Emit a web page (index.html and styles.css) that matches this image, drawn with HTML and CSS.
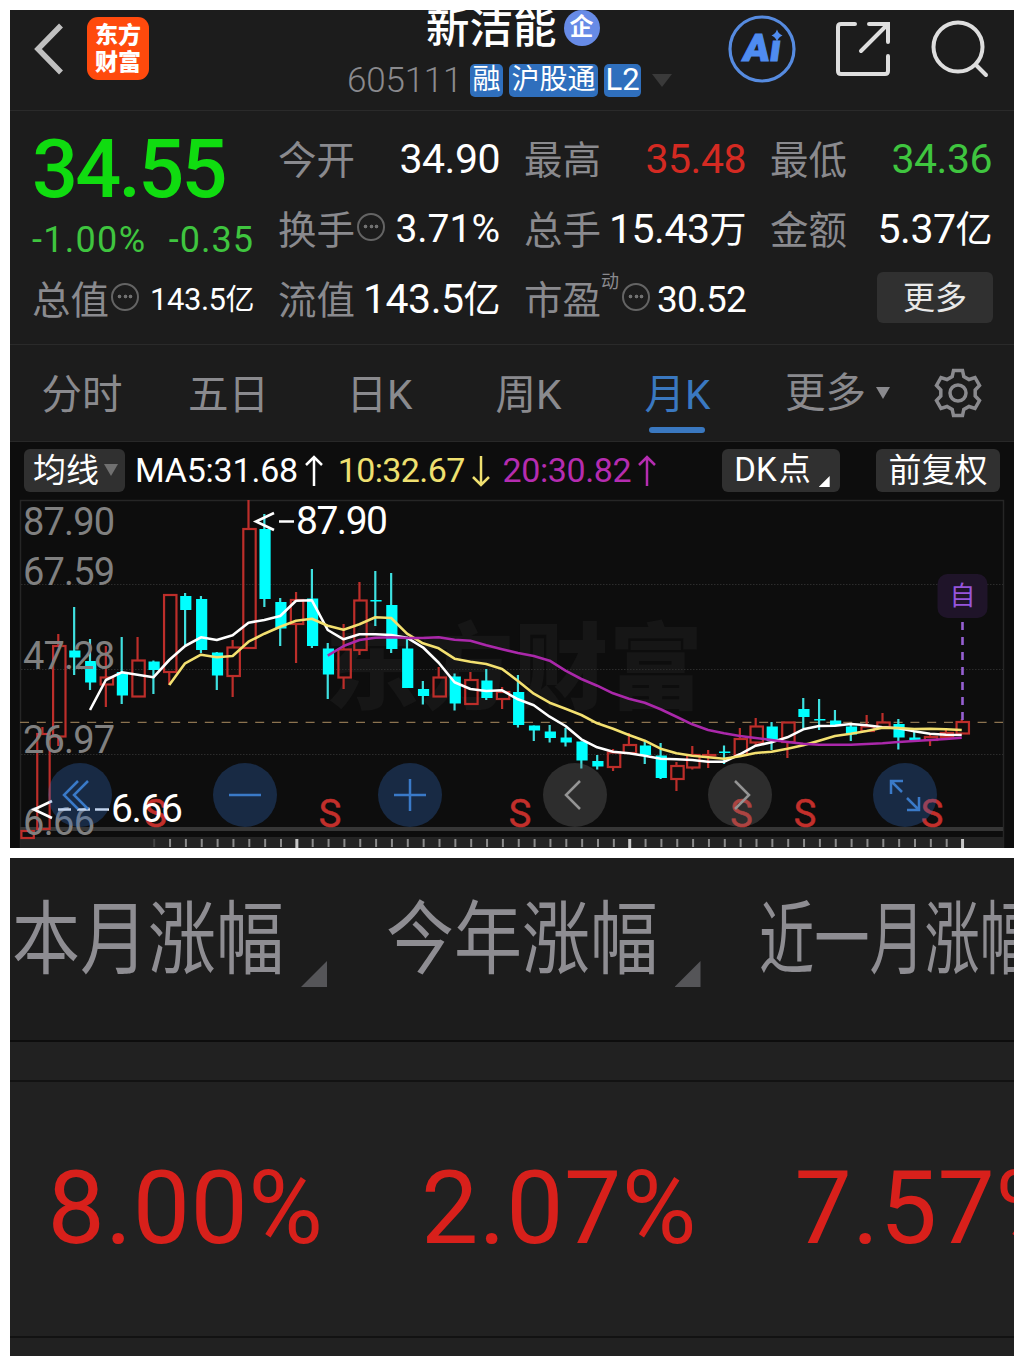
FILE: index.html
```html
<!DOCTYPE html>
<html lang="zh-CN">
<head>
    <meta charset="UTF-8">
    <title>新洁能 605111</title>
    <link rel="stylesheet" href="styles.css">
</head>
<body>
    <div class="panel quote-panel">
        <header class="topbar">
            <svg class="back" viewBox="0 0 30 54"><path d="M27 3.500L4 27L27 50.500"/></svg>
            <div class="logo"><span>东方</span><span>财富</span></div>
            <div class="title">
                <div class="name">新洁能<span class="corp">企</span></div>
                <div class="code">
                    <span class="num">605111</span>
                    <span class="tag">融</span><span class="tag">沪股通</span><span class="tag l2">L2</span>
                    <i class="caret"></i>
                </div>
            </div>
            <svg class="ai" viewBox="0 0 68 68">
                <circle cx="34" cy="34" r="32"/>
                <text x="20" y="46.500" textLength="38" lengthAdjust="spacingAndGlyphs" transform="skewX(-8)">Aı</text>
                <path d="M49 14.500q1.500 4.500 5.500 6q-4 1.500 -5.500 6q-1.500 -4.500 -5.500 -6q4 -1.500 5.500 -6z"/>
            </svg>
            <svg class="share" viewBox="0 0 56 56"><path d="M21 4H7Q4 4 4 7V51Q4 54 7 54H51Q54 54 54 51V36M35 4H54V22M53 5L27 31"/></svg>
            <svg class="search" viewBox="0 0 58 58"><circle cx="27" cy="27" r="24.500"/><path d="M45 45L55 55"/></svg>
        </header>

        <section class="stats">
            <div class="quote">
                <div class="price">34.55</div>
                <div class="change"><span>-1.00%</span><span>-0.35</span></div>
                <div class="cell"><label>总值</label><i class="dots"></i><b class="small cjk">143.5<em>亿</em></b></div>
            </div>
            <div class="grid">
                <div class="cell"><label>今开</label><b>34.90</b></div>
                <div class="cell"><label>最高</label><b class="up">35.48</b></div>
                <div class="cell"><label>最低</label><b class="down">34.36</b></div>
                <div class="cell"><label>换手</label><i class="dots"></i><b class="pct">3.71%</b></div>
                <div class="cell"><label>总手</label><b class="cjk">15.43<em>万</em></b></div>
                <div class="cell"><label>金额</label><b class="cjk">5.37<em>亿</em></b></div>
                <div class="cell"><label>流值</label><b class="cjk">143.5<em>亿</em></b></div>
                <div class="cell"><label>市盈<sup>动</sup></label><i class="dots"></i><b class="pe">30.52</b></div>
                <div class="cell"><button class="more">更多</button></div>
            </div>
        </section>

        <nav class="tabs">
            <a>分时</a>
            <a>五日</a>
            <a>日K</a>
            <a>周K</a>
            <a class="active">月K</a>
            <a class="drop">更多<i class="caret"></i></a>
            <svg class="gear" viewBox="0 0 50 50">
                <path d="M20.500 2.500H29.500L30.800 8.500L36 11.500L42 9.500L46.500 17.500L42.200 22V28L46.500 32.500L42 40.500L36 38.500L30.800 41.500L29.500 47.500H20.500L19.200 41.500L14 38.500L8 40.500L3.500 32.500L7.800 28V22L3.500 17.500L8 9.500L14 11.500L19.200 8.500Z"/>
                <circle cx="25" cy="25" r="8"/>
            </svg>
        </nav>

        <div class="ma">
            <button class="ma-type">均线<i class="caret"></i></button>
            <span class="ma5">MA5:31.68<svg viewBox="0 0 18 32"><path d="M9 31V2M1 10L9 2L17 10"/></svg></span>
            <span class="ma10">10:32.67<svg viewBox="0 0 18 32"><path d="M9 1V30M1 22L9 30L17 22"/></svg></span>
            <span class="ma20">20:30.82<svg viewBox="0 0 18 32"><path d="M9 31V2M1 10L9 2L17 10"/></svg></span>
            <button class="dk">DK<em>点</em><i class="corner"></i></button>
            <button class="fq">前复权</button>
        </div>

        <div class="chart">
            <svg class="kline" viewBox="10 499 1004 350">
                <text class="watermark" x="325" y="702" textLength="378">东方财富</text>
                <rect class="band" x="20" y="837" width="984" height="12"/>
                <path class="frame" d="M20.500 849V500.500H1003.500V849"/>
                <path class="grid-line" d="M21 584.500H1003M21 669.500H1003M21 754.500H1003"/>
                <path class="base" d="M20 829H1003"/>
                <path class="last" d="M20 722.300H1003"/>
                <g id="ticks"></g>
                <g id="candles"></g>
                <g id="lines"></g>
                <g class="scale">
                    <text x="23" y="535" textLength="92">87.90</text>
                    <text x="23" y="584.500" textLength="92">67.59</text>
                    <text x="23" y="669" textLength="92">47.28</text>
                    <text x="23" y="753" textLength="92">26.97</text>
                    <text x="23" y="835" textLength="72">6.66</text>
                </g>
                <g id="sells"></g>
                <g class="extreme">
                    <path d="M274 513L256 521.500L274 530M279 521.500H294"/>
                    <text x="296" y="534" textLength="92">87.90</text>
                    <path d="M52 801L34 809.500L52 818M58 809.500H71M77 809.500H90M95 809.500H109"/>
                    <text x="111" y="822" textLength="72">6.66</text>
                </g>
                <path class="self-line" d="M962.500 622V720"/>
                <rect class="self-box" x="937.500" y="574" width="50" height="44" rx="10"/>
                <text class="self" x="949.500" y="605">自</text>
            </svg>
            <div class="tools">
                <span><svg viewBox="0 0 64 64"><path d="M30 18L16 32L30 46M40 18L26 32L40 46"/></svg></span>
                <span><svg viewBox="0 0 64 64"><path d="M16 32H48"/></svg></span>
                <span><svg viewBox="0 0 64 64"><path d="M16 32H48M32 16V48"/></svg></span>
                <span class="gray"><svg viewBox="0 0 64 64"><path d="M37 18L23 32L37 46"/></svg></span>
                <span class="gray"><svg viewBox="0 0 64 64"><path d="M27 18L41 32L27 46"/></svg></span>
                <span><svg viewBox="0 0 64 64"><path d="M30 18H18V31M18 18L29 29M34 47H46V34M46 47L34 35"/></svg></span>
            </div>
        </div>
    </div>

    <div class="panel range-panel">
        <div class="range-head">
            <div><span>本月涨幅</span><i></i></div>
            <div><span>今年涨幅</span><i></i></div>
            <div><span class="five">近一月涨幅</span></div>
        </div>
        <div class="range-gap"></div>
        <div class="range-body">
            <div>8.00%</div>
            <div>2.07%</div>
            <div>7.57%</div>
        </div>
    </div>

    <script src="chart.js"></script>
</body>
</html>
```
FILE: styles.css
```css
* { box-sizing: border-box; }
body { margin: 0; padding: 10px; width: 1024px; height: 1366px; overflow: hidden; background: #fff; color: #fff; font-family: Roboto, "Noto Sans CJK SC", sans-serif; }
svg { display: block; flex: none; fill: none; }
em, i { font-style: normal; }
button { border: 0; padding: 0; margin: 0; color: #fff; background: #303030; border-radius: 6px; font-family: inherit; }
.panel { width: 1004px; overflow: hidden; background: #1c1c1c; }
.caret { display: block; width: 0; height: 0; border: 7px solid transparent; border-bottom: 0; border-top: 12px solid #8a8a8e; }

/* top bar */
.topbar { display: flex; height: 101px; padding-left: 24px; border-bottom: 1px solid #2a2a2a; }
.back { width: 30px; height: 54px; margin-top: 12px; stroke: #c0c0c0; stroke-width: 5.500; }
.logo { width: 62px; height: 63px; margin: 7px 0 0 23px; padding-top: 5px; border-radius: 11px; background: #ff4a0d; font-size: 23px; font-weight: 900; line-height: 27px; text-align: center; }
.logo span { display: block; }
.title { width: 325px; margin-left: 198px; flex: none; }
.name { display: flex; align-items: center; height: 40px; margin: -6px 0 0 79px; font-size: 43.5px; font-weight: 500; white-space: nowrap; }
.corp { width: 36px; height: 36px; margin: 8px 0 0 7px; border-radius: 50%; background: #678be6; font-size: 24px; line-height: 34px; font-weight: 700; text-align: center; }
.code { display: flex; align-items: center; height: 34px; margin-top: 19px; color: #8a8a8e; }
.code .num { width: 123px; font-size: 35px; font-weight: 300; letter-spacing: -.2px; }
.tag { height: 33px; margin-right: 6px; padding: 0 2.500px; border-radius: 5px; background: #2f6fbd; color: #fff; font-size: 28px; line-height: 32px; white-space: nowrap; }
.tag.l2 { width: 37px; padding: 0; text-align: center; font-size: 31px; }
.code .caret { margin-left: 5px; border-width: 13px 10px 0; border-top-color: #3a3a3a; }
.ai { width: 68px; height: 68px; margin: 5px 0 0 56px; stroke: #568be0; stroke-width: 3.200; }
.ai text { fill: #4f8cf0; stroke: #4f8cf0; stroke-width: 1; font-size: 38px; font-weight: 900; }
.ai path { fill: #4f8cf0; stroke: none; }
.share { width: 56px; height: 56px; margin: 10px 0 0 38px; stroke: #dedede; stroke-width: 4; stroke-linecap: round; }
.search { width: 58px; height: 58px; margin: 10px 0 0 41px; stroke: #dedede; stroke-width: 4; stroke-linecap: round; }

/* quote numbers */
.stats { display: flex; height: 234px; padding: 13px 22px 0; border-bottom: 1px solid #2a2a2a; }
.quote { width: 222px; margin-right: 24px; }
.price { height: 91px; color: #10dc10; font-size: 81px; font-weight: 500; line-height: 91px; letter-spacing: -2.800px; }
.change { display: flex; justify-content: space-between; height: 49px; color: #3fc53f; font-size: 36px; line-height: 50px; letter-spacing: 1px; }
.change span:first-child { letter-spacing: 1.300px; }
.grid { display: grid; grid-template-columns: repeat(3, 222px); column-gap: 24px; grid-auto-rows: 70px; }
.cell { display: flex; align-items: center; height: 70px; white-space: nowrap; }
.cell label { margin-top: -5px; color: #8a8a8e; font-size: 38.500px; position: relative; }
.cell b { margin-left: auto; font-size: 41px; font-weight: 400; letter-spacing: -.5px; }
.cell b em { font-size: 37px; }
.cell b.cjk { margin-top: -4px; }
.cell b.pct { font-size: 39px; letter-spacing: 0; }
.cell b.pe { font-size: 37px; letter-spacing: -.8px; }
.cell b.small { font-size: 31px; }
.cell b.small em { font-size: 29px; }
.cell b.up { color: #d42a22; }
.cell b.down { color: #3fc53f; }
.cell sup { position: absolute; left: 77px; top: 3px; font-size: 18px; line-height: 20px; }
.dots { width: 28px; height: 28px; margin: -5px 0 0 2px; border: 2px solid #646464; border-radius: 50%; background: radial-gradient(circle, #707070 1.500px, transparent 2.200px) 50% 50% / 7px 7px no-repeat, radial-gradient(circle, #707070 1.500px, transparent 2.200px) 15% 50% / 7px 7px no-repeat, radial-gradient(circle, #707070 1.500px, transparent 2.200px) 85% 50% / 7px 7px no-repeat; }
label:has(sup) + .dots { margin-left: 21px; }
.more { width: 116px; height: 51px; margin: -3px -1px 0 auto; padding-bottom: 6px; color: #e8e8e8; font-size: 32px; }

/* period tabs */
.tabs { display: flex; height: 97px; border-bottom: 1px solid #282828; }
.tabs a { position: relative; width: 149px; color: #8a8a8e; font-size: 40.500px; line-height: 100px; text-align: center; }
.tabs a:first-child { width: 144px; }
.tabs a:nth-child(n+3):nth-child(-n+5) { padding-left: 4px; }
.tabs .active { color: #3a78c0; }
.tabs .active::after { content: ""; position: absolute; left: 48px; bottom: 8px; width: 56px; height: 6px; border-radius: 3px; background: #3a78c0; }
.tabs .drop { display: flex; align-items: center; gap: 10px; width: 183px; padding-left: 35px; }
.gear { width: 50px; height: 50px; margin-top: 23px; stroke: #8a8a8e; stroke-width: 3.500; }

/* moving averages */
.ma { display: flex; height: 57px; padding: 7px 14px 0; background: #0d0d0d; font-size: 34px; line-height: 43px; white-space: nowrap; }
.ma button { height: 43px; font-size: 33px; line-height: 41px; }
.ma span { display: flex; letter-spacing: -.2px; }
.ma svg { width: 18px; height: 32px; margin: 6px 0 0 7px; stroke: currentColor; stroke-width: 2.500; }
.ma .ma-type { display: flex; align-items: center; gap: 5px; width: 101px; padding-left: 9px; }
.ma-type .caret { margin-top: -2px; border-top-color: #707070; }
.ma5 { width: 203px; margin-left: 10px; }
.ma .ma10 { width: 165px; color: #efe070; letter-spacing: -.6px; }
.ma .ma20 { width: 220px; color: #b52cb0; letter-spacing: -.4px; }
.ma .dk { display: flex; width: 118px; padding-left: 12px; }
.dk em { margin-left: 2px; font-size: 32px; }
.corner { margin: 27px 0 0 8px; width: 11px; height: 11px; background: #fff; clip-path: polygon(100% 0, 100% 100%, 0 100%); }
.fq { width: 124px; margin-left: 36px; }

/* k-line chart */
.chart { position: relative; height: 349px; overflow: hidden; background: #0d0d0d; }
.kline { width: 1004px; height: 350px; }
.watermark { fill: #161616; font-size: 94px; font-weight: 900; }
.frame { stroke: #262626; stroke-width: 1.500; }
.grid-line { stroke: #2c2c2c; stroke-dasharray: 1.500 1.500; }
.base { stroke: #363636; stroke-width: 4; }
.band { fill: #242424; }
.last { stroke: #8c7350; stroke-width: 1.300; stroke-dasharray: 9 7.800; }
.tick { stroke: #8c8c8c; stroke-width: 2; }
.tick.major { stroke: #c8c8c8; stroke-width: 3; }
.red { stroke: #bd2e2a; stroke-width: 2.200; }
.cyan { stroke: #3fe0e0; stroke-width: 2.200; }
.cyan.body { fill: #00ffff; stroke: none; }
.line5, .line10, .line20 { stroke-width: 2.600; stroke-linejoin: round; }
.line5 { stroke: #fff; }
.line10 { stroke: #f3e070; }
.line20 { stroke: #aa28aa; }
.scale { fill: #808080; font-size: 38px; }
.extreme { fill: #fff; font-size: 39px; }
.extreme path { fill: none; stroke: #fff; stroke-width: 2.600; }
.sell { fill: #c22f2b; font-size: 38px; text-anchor: middle; stroke: #c22f2b; stroke-width: .5; }
.self-line { stroke: #9660d2; stroke-width: 2.600; stroke-dasharray: 8 7; }
.self-box { fill: #1f1429; }
.self { fill: #9655dc; font-size: 26px; }
.tools { position: absolute; left: 38px; top: 264px; display: flex; gap: 101px; }
.tools span { width: 64px; height: 64px; border-radius: 50%; background: rgba(50, 110, 196, .3); stroke: #3a7ac8; stroke-width: 2.500; }
.tools .gray { background: rgba(120, 120, 120, .3); stroke: #949494; }

/* range gains */
.range-panel { height: 498px; margin-top: 10px; background: #212121; }
.range-head, .range-body { display: flex; }
.range-head { height: 184px; background: #1c1c1c; border-bottom: 2px solid #0d0d0d; }
.range-head div { display: flex; flex: none; width: 373.500px; padding-left: 2px; color: #8e8d92; font-size: 80px; line-height: 164px; white-space: nowrap; }
.range-head span { width: 287px; transform: scaleX(.85); transform-origin: 0 0; }
.range-head .five { transform: scaleX(.69); }
.range-head i { width: 26px; height: 26px; margin: 103px 0 0 2px; background: #555558; clip-path: polygon(100% 0, 100% 100%, 0 100%); }
.range-gap { height: 40px; border-bottom: 2px solid #121212; }
.range-body { height: 256px; border-bottom: 2px solid #121212; }
.range-body div { flex: none; width: 373.500px; padding-right: 60px; color: #d8201b; font-size: 102px; line-height: 252px; letter-spacing: .5px; text-align: right; white-space: nowrap; }
```
FILE: chart.js
```js
const STEP = 15.85;
const X0 = 26.6;

// [color, high, top, bottom, low]
const candles = [
    ['r', 831, 831, 838, 838], ['r', 727, 734, 829, 829], ['r', 634, 646, 736.5, 746], ['c', 607, 650.5, 657.5, 675],
    ['c', 639, 661, 682.5, 690], ['r', 646, 677.5, 684.5, 707], ['c', 637, 672, 695.5, 704], ['r', 637, 660.5, 696.5, 697],
    ['c', 660.5, 661.5, 670, 694], ['r', 595, 595, 672, 685], ['c', 593, 596, 610, 646], ['c', 596, 599, 650, 653],
    ['c', 652, 652.5, 675.5, 690], ['r', 640, 647.5, 676, 697], ['r', 500, 529, 648, 648], ['c', 514, 529, 599, 607],
    ['c', 598, 602, 628.5, 646], ['r', 592, 600, 624, 663], ['c', 569, 598.5, 646, 648], ['c', 643, 648.5, 674.5, 699],
    ['r', 624, 649.5, 677.5, 689], ['r', 582, 600.5, 650, 655], ['c', 571, 600, 601.5, 626], ['c', 573, 605, 649, 653],
    ['c', 638, 648.5, 688, 688], ['c', 681, 689, 696, 704.5], ['r', 667, 677.5, 696.5, 697], ['c', 673.5, 676.5, 703.5, 710.5],
    ['r', 672, 680, 704, 704], ['c', 669, 680.5, 698, 700], ['r', 687, 692, 699, 709], ['c', 675, 692, 725, 727.5],
    ['c', 725.5, 725.5, 730.5, 741], ['c', 725, 731.5, 738, 742.5], ['c', 728, 737.5, 742.5, 746.5], ['c', 741.5, 741.5, 760.5, 768.5],
    ['c', 755, 761, 766.5, 769.5], ['r', 749, 752.5, 767, 771], ['r', 733, 745, 753, 753], ['c', 742, 745.5, 755, 764],
    ['c', 743, 755.5, 778, 779], ['r', 762, 766, 779, 791], ['r', 746, 755, 767.5, 769.5], ['r', 750, 755, 755.5, 768],
    ['c', 745.5, 751.5, 753, 764], ['r', 728, 739, 755, 755], ['r', 718, 726.5, 742.5, 747], ['c', 722, 726.5, 741, 750],
    ['r', 722.5, 722.5, 742, 758], ['c', 698, 709, 717, 728.5], ['c', 699, 719, 720.5, 730], ['c', 710, 720.5, 725.5, 725.5],
    ['c', 725, 726.5, 734.5, 741], ['r', 715, 726.5, 731, 731], ['r', 713, 722.5, 727, 727], ['c', 719, 724, 737.5, 749.5],
    ['c', 731.5, 737.5, 740, 740], ['r', 735, 737, 740, 746], ['r', 729, 733, 737, 737], ['r', 719, 722, 733.5, 733.5]
];

const ma5 = [710, 680, 672.3, 674.7, 677.3, 660, 646, 637.3, 640, 635.3, 622.7, 620, 616, 600.7, 600.3, 630, 639.3, 634.3, 634.3, 635,
    637.7, 647.3, 662.7, 682.3, 689, 691, 690.3, 699.3, 705.3, 716.7, 726, 739.3, 747.3, 751.7, 753.3, 755.7, 758.7, 759.3, 760, 761.7,
    761.7, 754.3, 745.7, 742.3, 737.3, 729.3, 726, 725.7, 724, 725.3, 727.3, 728.3, 731.3, 733.7, 734.7, 735];
const ma10 = [685, 663.3, 654.7, 657.3, 656, 641.7, 633.7, 626.7, 620.7, 618.7, 625.7, 629.7, 624.3, 617.3, 618, 633.7, 643.3, 648.3,
    658.7, 661.7, 664, 669, 681, 693.7, 702.7, 708.7, 715, 723.3, 728.7, 735, 740.7, 748.7, 753.3, 755.7, 757.3, 758.7, 756.3, 753,
    751.7, 748.7, 745.3, 740.7, 736, 733.7, 731, 727.7, 728, 729, 728.7, 729.3, 730];
const ma20 = [655.7, 646, 640, 637.7, 637.3, 638, 638, 637.3, 639.7, 640.7, 645.3, 649.3, 653, 656, 660.7, 670.7, 679, 685.7, 693.3,
    698.7, 702.7, 709.3, 716.7, 724.3, 730, 733.3, 736, 738, 740, 742, 743.7, 744.7, 744.7, 744.7, 744, 743.3, 742, 741, 740, 739, 737.7];

const xAt = i => X0 + i * STEP;

function drawCandles() {
    let out = '';
    candles.forEach(([color, high, top, bottom, low], i) => {
        const x = xAt(i);
        if (color === 'r') {
            out += `<path class="red" d="M${x} ${high}V${top}M${x} ${bottom}V${low}"/>`;
            out += `<rect class="red" x="${x - 5.2}" y="${top}" width="12.4" height="${bottom - top}"/>`;
        } else {
            out += `<path class="cyan" d="M${x} ${high}V${low}"/>`;
            out += `<rect class="cyan body" x="${x - 4.9}" y="${top}" width="11.2" height="${bottom - top}"/>`;
        }
    });
    document.getElementById('candles').innerHTML = out;
}

function drawLines() {
    const line = (cls, data) => {
        const start = candles.length - data.length;
        const pts = data.map((y, i) => `${xAt(start + i)},${y}`).join(' ');
        return `<polyline class="${cls}" points="${pts}"/>`;
    };
    document.getElementById('lines').innerHTML = line('line5', ma5) + line('line10', ma10) + line('line20', ma20);
}

function drawTicks() {
    let out = '';
    for (let i = 8; i < 60; i++) {
        const major = i === 17 || i === 38 || i === 59;
        out += `<path class="tick${major ? ' major' : ''}" d="M${xAt(i) + 0.8} 839V${major ? 849 : 847}"${i === 8 ? ' opacity=".3"' : ''}/>`;
    }
    document.getElementById('ticks').innerHTML = out;
}

function drawSells() {
    document.getElementById('sells').innerHTML = [155.5, 330, 520, 741.5, 805, 932]
        .map(x => `<text class="sell" x="${x}" y="827">S</text>`).join('');
}

drawCandles();
drawLines();
drawTicks();
drawSells();
```
